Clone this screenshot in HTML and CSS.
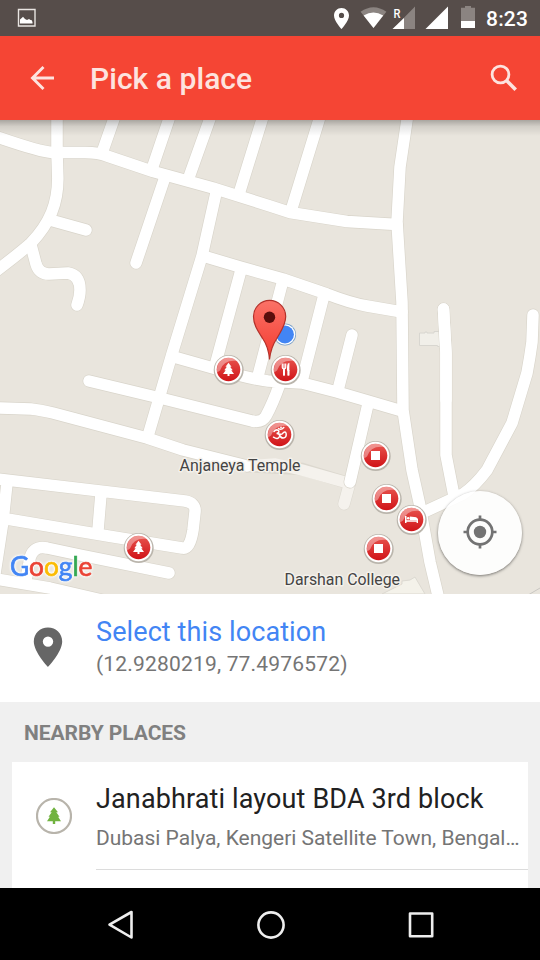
FILE: index.html
```html
<!DOCTYPE html>
<html lang="en">
<head>
<meta charset="utf-8">
<title>Pick a place</title>
<link rel="stylesheet" href="styles.css">
</head>
<body>
<div class="screen">
  <div class="status-bar">
    <svg class="status-photo" width="20" height="20" viewBox="0 0 20 20"><path d="M1.500 1.500h16.500v16.500h-16.500z" fill="none" stroke="#e9e5e2" stroke-width="1.400"/><path d="M3 15.500v-4l2-1.800 1-1 2 2.200 2 1 2-1 1.500 1 1 .2 1 2v1.400z" fill="#fff"/></svg>
    <svg class="status-icons" width="150" height="36" viewBox="330 0 150 36">
      <path fill="#fff" fill-rule="evenodd" d="M341.500 8c-4.200 0-7.500 3.300-7.500 7.400 0 5.500 7.500 13.600 7.500 13.600s7.500-8.100 7.500-13.600c0-4.100-3.300-7.400-7.500-7.400zm0 4.800a2.600 2.600 0 1 1 0 5.200 2.600 2.600 0 0 1 0-5.200z"/>
      <path fill="#8b8481" d="M360.600 11.800Q373.500 2.500 386.400 11.800L373.500 28z"/>
      <path fill="#fff" d="M363.600 15.500Q373.500 9.500 383.200 15.500L373.500 28z"/>
      <path fill="#8b8481" d="M415 6.500V29H393z"/><path fill="#fff" d="M404 18v11H392.500z"/>
      <text class="roaming" x="393.400" y="17.700" textLength="7" lengthAdjust="spacingAndGlyphs">R</text>
      <path fill="#fff" d="M448 6.500V29H425.500z"/>
      <path fill="#8b8481" d="M461 7.800h4V6h6v1.800h4V28h-14z"/><path fill="#fff" d="M461 21h14v7h-14z"/>
    </svg>
    <span class="clock">8:23</span>
  </div>
  <header class="app-bar">
    <svg class="back" width="26" height="26" viewBox="0 0 26 26"><path d="M24 13H2.500M13.500 2 2.500 13l11 11" fill="none" stroke="#fde3df" stroke-width="2.900"/></svg>
    <h1 class="title">Pick a place</h1>
    <svg class="search" width="28" height="28" viewBox="0 0 28 28"><g fill="none" stroke="#fde3df"><circle cx="10.500" cy="10.500" r="8.400" stroke-width="2.800"/><path d="m16.500 16.500 9.200 9.200" stroke-width="3.600"/></g></svg>
  </header>
  <main class="map">
    <svg width="540" height="474" viewBox="0 120 540 474">
      <defs>
        <linearGradient id="badge" x1="0" y1="0" x2="0" y2="1"><stop offset="0" stop-color="#e8544e"/><stop offset="1" stop-color="#d01318"/></linearGradient>
        <linearGradient id="marker" x1="0" y1="0" x2="0" y2="1"><stop offset="0" stop-color="#fb7267"/><stop offset="1" stop-color="#f33b30"/></linearGradient>
        <linearGradient id="shade" x1="0" y1="0" x2="0" y2="1"><stop offset="0" stop-color="#000" stop-opacity=".28"/><stop offset=".4" stop-color="#000" stop-opacity=".1"/><stop offset="1" stop-color="#000" stop-opacity="0"/></linearGradient>
        <g id="roads" fill="none" stroke-linecap="round" stroke-linejoin="round">
          <path d="M-10 134.500 0 138Q41 152 52 152.500H85Q99 152.500 107 156L153 171.500 213 188 270 206 290 212.500 347 221.500 397 224.500"/>
          <path d="M57 110V152L57.800 178C58 203 50 223 31 243Q20 253-8 274"/>
          <path d="M50 220 86 230M31 245 36 264Q39 274 49 274L68 273Q80 275 80 290 80 297 77 305"/>
          <path d="M117 110 102 153M172 110 152 169M213 110 188 180M265 110 239 194M322 110 291 211M164 180 136 263M216 193 202 256 172 354 148 436"/>
          <path d="M203 256 240 267 283 279 327 294Q350 303 367 306L402 312M241 270 215 366M283 280 258 376M324 295 302 381M352 335 338 390"/>
          <path d="M408.500 110 407 120 400 167 397 222 402 302 403 410 412 470 420 506 430 562 440 604"/>
          <path d="M443.500 309 446 353V455L454 496M533 315 532 342Q530 357 527 373L512 423 487 470Q475 486 463 494L424 512"/>
          <path d="M174 357 213 368Q250 379 268 381L302 383 337 392 402 411M89 381 160 398 252 421Q262 423 266 416 273 403 279 386"/>
          <path d="M-10 408 0 408 31 409Q40 410 53 413L147 438 183 450 247 466M368 404 350 482"/>
          <path d="M-10 478 100 491 185 501Q196 503 195 512L193 530Q190 550 182 548L108 536 7 519M7 483 3 521-6 580M101 494 98 530"/>
          <path d="M26 580 29 563Q31 545 47 548L80 555 169 573M-10 578 50 588 110 602"/>
        </g>
        <g id="poi"><circle cx=".2" cy=".6" r="15" fill="#bab5ac"/><circle r="13.700" fill="#fff"/><circle r="11.800" fill="url(#badge)"/><path d="M-11.300 3A11.800 11.800 0 0 1 8-8.700Q-5-10-8.500 1 -10 2-11.300 3z" fill="#fff" opacity=".38"/></g>
        <path id="tree" d="M0-6.800 3-2.700H1.600L4.200.7H2.800L5.500 4.500H1V6.500H-1V4.500H-5.500L-2.800.7H-4.200L-1.600-2.700H-3z"/>
      </defs>
      <rect y="120" width="540" height="474" fill="#e9e5dd"/>
      <path d="M382 594 402 584 402 581 410 580 415 577 425 594z" fill="#f4f2ea" stroke="#dcd9d1"/>
      <path d="M419.500 333H425V332h2v1h7v-1.500h6.500V346.500h-3v-1h-18z" fill="#f1efe9" stroke="#d8d6d0"/>
      <path d="M529 594.500 540 588" stroke="#c9c7c2"/>
      <g fill="none" stroke="#f5f2ed" stroke-linecap="round"><path d="M247 466 302 469 348 483M350 482 344 504" stroke="#dcd8cf" stroke-width="12.500"/><path d="M247 466 275 464 302 470 348 483M350 482 344 504" stroke-width="11.500"/></g>
      <use href="#roads" stroke="#d9d5cb" stroke-width="12.800"/>
      <use href="#roads" stroke="#fff" stroke-width="11.500"/>
      <path d="M443.500 309 446 353V400" fill="none" stroke="#fff" stroke-width="11.500" stroke-linecap="round"/>
      <rect y="120" width="540" height="16" fill="url(#shade)"/>
      <use href="#poi" x="228.500" y="369.500"/><use href="#tree" x="228.500" y="369.500" fill="#fff"/>
      <use href="#poi" x="138.500" y="547.500"/><use href="#tree" x="138.500" y="547.500" fill="#fff"/>
      <use href="#poi" x="285.500" y="369.500"/>
      <path d="M282.300 363.500v4q0 1.500 1.700 1.500t1.700-1.500v-4M284 363.500v12M288.300 363.500v12" stroke="#fff" stroke-width="1.200" fill="none"/><path d="M284 369v6.500M288.500 370v5.500" stroke="#fff" stroke-width="2"/><path d="M289.400 362.800v8h-2.400q-.5-6.500 2.400-8z" fill="#fff"/>
      <use href="#poi" x="279.500" y="434.500"/>
      <path d="M274 431.500q2-2.500 4.300-1.200 1.800 2-1.600 3.200 3.600.3 2.800 3-1.500 3.700-6 .7M279.500 434q2.500 1 3.500-1 2.500-2.200 3.200.8.300 4-3 4.200-2.400 0-2.800-2M278.500 428.500q2.600 2 5.300-1" fill="none" stroke="#fff" stroke-width="1.500" stroke-linecap="round"/><circle cx="281" cy="427.300" r=".9" fill="#fff"/>
      <use href="#poi" x="375.500" y="455.500"/><path d="M371 451h9v9h-9z" fill="#fff"/>
      <use href="#poi" x="386.500" y="498.500"/><path d="M382 494h9v9h-9z" fill="#fff"/>
      <use href="#poi" x="378.500" y="548.500"/><path d="M374 544h9v9h-9z" fill="#fff"/>
      <use href="#poi" x="411.500" y="519.500"/><path d="M405 516h1.500v4.300H416.800V518.500h1.200V523h-1.400v-1.200H406.500V523H405zM409.800 520v-3.500l6.500.8q1 .5 1 2.700z" fill="#fff"/><circle cx="408.200" cy="518.200" r="1.300" fill="#fff"/>
      <g class="place-label">
        <text x="179.500" y="470.700" textLength="121" lengthAdjust="spacingAndGlyphs">Anjaneya Temple</text>
        <text x="284.500" y="584.500" textLength="115.500" lengthAdjust="spacingAndGlyphs">Darshan College</text>
      </g>
      <circle cx="285" cy="334.500" r="11" fill="#789fc8"/><circle cx="285" cy="334.500" r="10.300" fill="#fff"/><circle cx="285" cy="334.500" r="8.900" fill="#4285f4"/>
      <path d="M269.500 359.500Q268.500 347 263 339C258 331 253.500 325 253.500 316.500a16 16 0 0 1 32.200 0C285.700 325 281 331 276.500 339Q271 347 269.500 359.500z" fill="url(#marker)" stroke="#b3312a" stroke-width="1.200"/>
      <circle cx="269.500" cy="317.300" r="5.700" fill="#590d0c"/>
      <text class="google" x="10" y="576" textLength="82.500" lengthAdjust="spacingAndGlyphs"><tspan class="g-blue">G</tspan><tspan class="g-red">o</tspan><tspan class="g-yellow">o</tspan><tspan class="g-blue">g</tspan><tspan class="g-green">l</tspan><tspan class="g-red">e</tspan></text>
    </svg>
    <button class="locate" aria-label="My location">
      <svg width="34" height="34" viewBox="0 0 34 34"><g fill="none" stroke="#737373" stroke-width="2.700"><circle cx="17" cy="17" r="12.300"/><path d="M17 .5V5M17 29v4.500M.5 17H5M29 17h4.500"/></g><circle cx="17" cy="17" r="6.200" fill="#737373"/></svg>
    </button>
  </main>
  <section class="select-row">
    <svg class="select-pin" width="30" height="41" viewBox="0 0 30 41"><path fill="#666" fill-rule="evenodd" d="M15 .5C7 .5.8 6.500.8 14.500.8 25 15 40 15 40S29.200 25 29.200 14.500C29.200 6.500 23 .5 15 .5zm0 8.900a5.200 5.200 0 1 1 0 10.400 5.200 5.200 0 0 1 0-10.400z"/></svg>
    <div class="copy">
      <div class="select-title">Select this location</div>
      <div class="coords">(12.9280219, 77.4976572)</div>
    </div>
  </section>
  <section class="nearby">
    <h2 class="nearby-title">NEARBY PLACES</h2>
    <div class="card">
      <svg class="place-icon" width="36" height="36" viewBox="-18 -18 36 36"><circle r="17" fill="#fff" stroke="#b8b4ab" stroke-width="2.200"/><path fill="#71b340" d="M0-8.800 4-3.700H2.300L5.500.8H4.100L7 5.300H1.200V8H-1.200V5.300H-7L-4.100.8H-5.500L-2.300-3.700H-4z"/></svg>
      <div class="place">
        <div class="place-name">Janabhrati layout BDA 3rd block</div>
        <div class="place-address">Dubasi Palya, Kengeri Satellite Town, Bengal…</div>
      </div>
    </div>
  </section>
  <nav class="nav-bar">
    <svg width="28" height="30" viewBox="0 0 28 30"><path d="M24.500 2v25.500L2.500 14.700z"/></svg>
    <svg width="30" height="30" viewBox="0 0 30 30"><circle cx="15" cy="15" r="12.600"/></svg>
    <svg width="28" height="30" viewBox="0 0 28 30"><path d="M3 3.500h22.200v22.700H3z"/></svg>
  </nav>
</div>
</body>
</html>
```
FILE: styles.css
```css
* { box-sizing: border-box; }
body { margin: 0; font-family: Roboto, "Liberation Sans", sans-serif; }
h1, h2 { margin: 0; }
svg { display: block; flex: none; }
.screen { width: 540px; height: 960px; display: flex; flex-direction: column; overflow: hidden; background: #f0f0f0; }
.status-bar { height: 36px; flex: none; display: flex; align-items: center; background: #564d4a; color: #fff; padding: 0 12px 0 17px; }
.status-icons { margin-left: auto; margin-right: 6px; }
.roaming { font-size: 12.500px; font-weight: 500; fill: #fff; }
.clock { width: 42px; font-size: 21px; font-weight: 500; line-height: 36px; white-space: nowrap; letter-spacing: .2px; padding-top: 1px; }
.app-bar { height: 84px; flex: none; display: flex; align-items: center; background: #f54534; padding: 0 22px 0 30px; }
.title { margin-left: 34px; font-size: 30px; font-weight: 500; line-height: 40px; letter-spacing: .05px; color: #fde3df; padding-top: 2px; }
.search { margin-left: auto; }
.map { height: 474px; flex: none; position: relative; }
.place-label { font-size: 16.500px; fill: #444; stroke: #f4f1eb; stroke-width: 3px; stroke-linejoin: round; paint-order: stroke; }
.google { font-family: Lato, sans-serif; font-size: 27px; font-weight: 400; stroke-width: .7px; filter: drop-shadow(0 0 1px #fff) drop-shadow(0 0 1px #fff); }
.g-blue { fill: #4285f4; stroke: #4285f4; }
.g-red { fill: #ea4335; stroke: #ea4335; }
.g-yellow { fill: #fbbc05; stroke: #fbbc05; }
.g-green { fill: #34a853; stroke: #34a853; }
.locate { position: absolute; right: 18px; bottom: 19px; width: 84px; height: 84px; display: flex; align-items: center; justify-content: center; padding: 0 0 2px; border: 0; border-radius: 50%; background: rgba(255, 255, 255, .9); box-shadow: 0 1px 3px rgba(0, 0, 0, .5); }
.select-row { height: 108px; flex: none; display: flex; align-items: center; background: #fff; padding: 0 0 1px 33px; }
.copy { margin-left: 33px; padding-bottom: 1px; white-space: nowrap; }
.select-title { font-size: 27px; line-height: 34px; letter-spacing: .1px; color: #4285f4; }
.coords { font-size: 21px; line-height: 30px; letter-spacing: .18px; color: #757575; }
.nearby { height: 186px; flex: none; display: flex; flex-direction: column; padding: 0 12px; }
.nearby-title { height: 60px; flex: none; padding-left: 12px; font-size: 21px; line-height: 62px; font-weight: 700; letter-spacing: -.06px; color: #808080; }
.card { flex: 1; display: flex; align-items: flex-start; background: #fff; padding-left: 24px; }
.place-icon { margin-top: 36px; }
.place { flex: 1; height: 108px; margin-left: 24px; padding-top: 19px; border-bottom: 1px solid #dcdcdc; white-space: nowrap; }
.place-name { font-size: 27px; line-height: 36px; letter-spacing: .13px; color: #212121; }
.place-address { font-size: 21px; line-height: 30px; letter-spacing: -.02px; margin-top: 6px; color: #757575; }
.nav-bar { height: 72px; flex: none; display: flex; align-items: center; justify-content: space-between; background: #000; padding: 1px 105.500px 0 106.500px; }
.nav-bar path, .nav-bar circle { fill: none; stroke: #eee; stroke-width: 2.600px; stroke-linejoin: round; }
```
